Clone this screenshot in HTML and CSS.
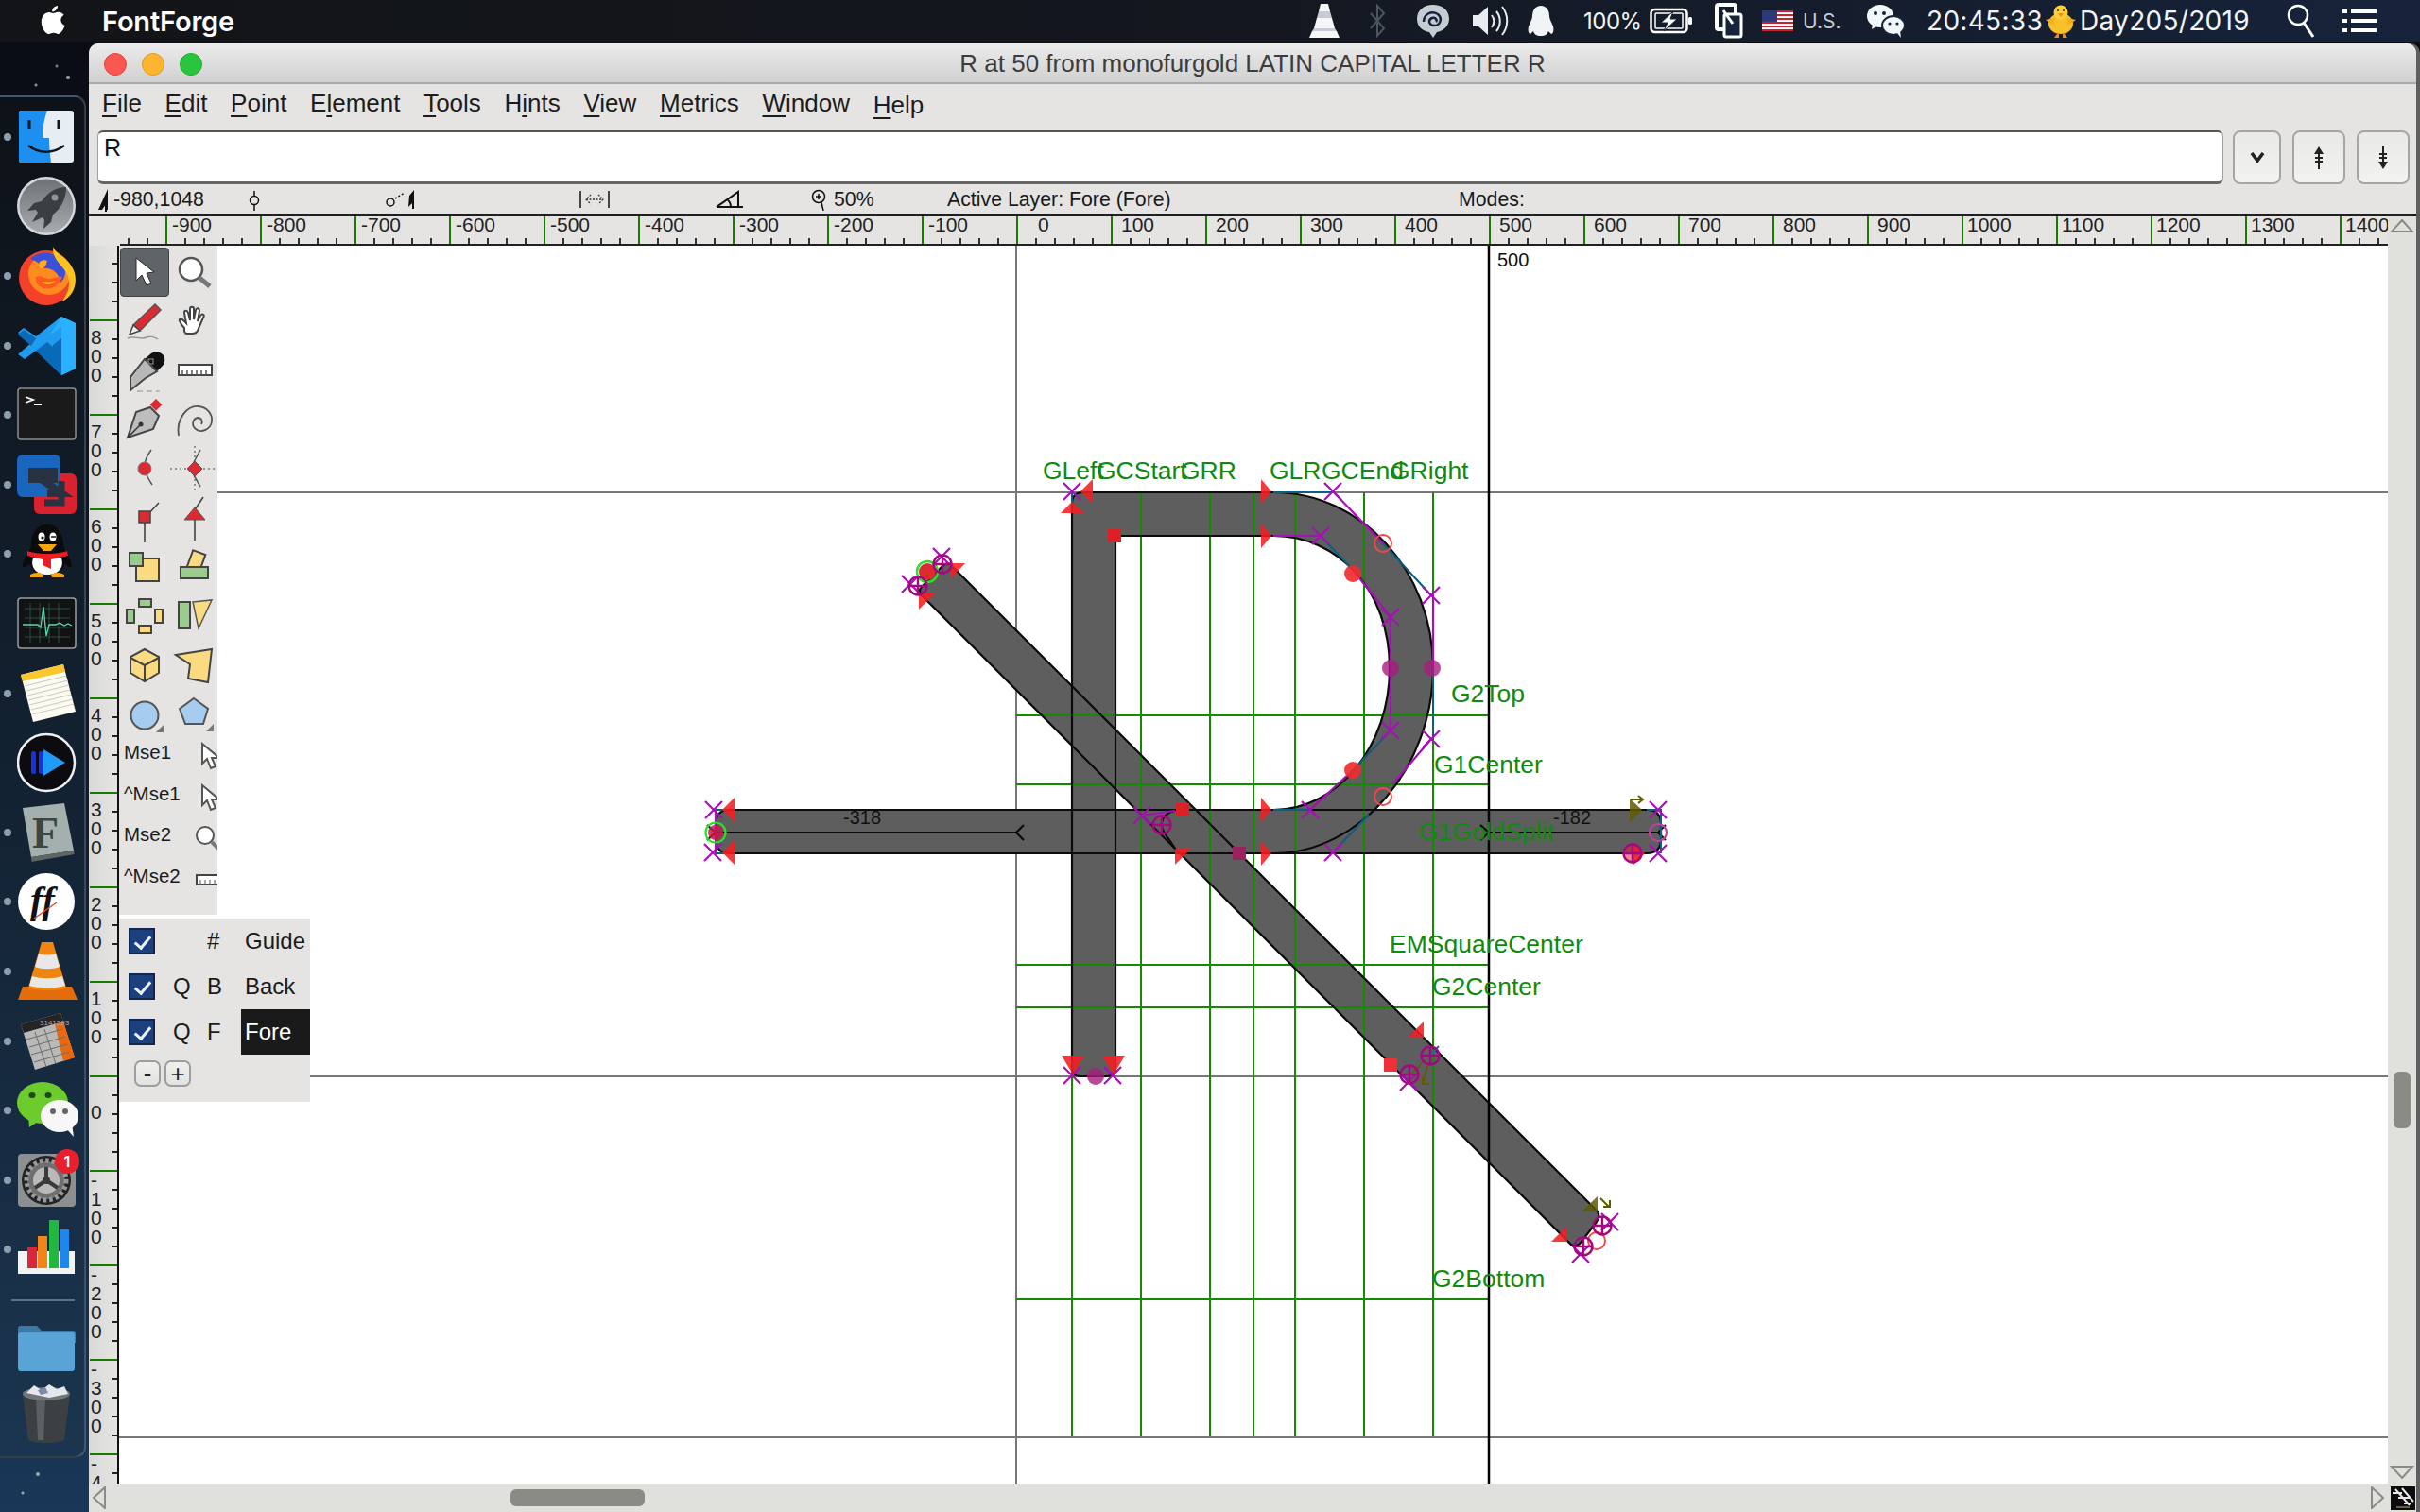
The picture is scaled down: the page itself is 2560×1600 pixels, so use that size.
FILE: index.html
```html
<!DOCTYPE html>
<html lang="en">
<head>
<meta charset="utf-8">
<title>FontForge</title>
<link rel="stylesheet" href="styles.css">
</head>
<body>
<header class="menubar">
  <div class="mb-left">
    <svg class="apple" width="26" height="34" viewBox="0 0 26 34"><path fill="#fff" d="M18 1c.3 3-2.500 6.500-5.800 6.300C11.800 4.200 14.800 1.200 18 1zM13 9c1.600 0 3.200-1.300 5.600-1.300 2.300 0 4.600 1 6 3-4.800 2.800-4 9.300 1 11.200-1.300 3.500-4 9-7 9-1.800 0-2.700-1.200-4.900-1.200s-3.200 1.200-5 1.200C5 31 .8 24 .8 18.200.8 12 4.700 8 9 8c1.600 0 3 1 4 1z"/></svg>
    <span class="appname">FontForge</span>
  </div>
  <div class="tray">
    <svg width="34" height="38" viewBox="0 0 34 38"><path fill="#f4f6f8" d="M13 1h8l2 8H11zM9 16h16l3 11H6zM4 30h26l3 7H1z"/><path fill="#c8ccd2" d="M11 9h12l2 7H9zM6 27h22l2 3H4z"/></svg>
    <svg width="20" height="36" viewBox="0 0 20 36"><path fill="none" stroke="#4b5560" stroke-width="2" d="M3 10l14 16-7 8V2l7 8L3 26"/></svg>
    <svg width="38" height="38" viewBox="0 0 38 38"><path fill="#c5ccd3" d="M19 2c10 0 17 6 17 15 0 8-7 13-13 14l-4 6-4-6C8 30 2 25 2 17 2 8 9 2 19 2z"/><path fill="none" stroke="#16233a" stroke-width="2.500" d="M9 20c0-8 8-12 15-8 5 4 3 12-4 12-5 0-7-6-2-8 3-1 6 2 4 4"/></svg>
    <svg width="40" height="36" viewBox="0 0 40 36"><path fill="#e8edf1" d="M1 12h6l10-9v30L7 24H1z"/><path fill="none" stroke="#e8edf1" stroke-width="2" d="M21 12c3 4 3 9 0 13M26 8c5 6 5 15 0 21M32 3c7 9 7 21 0 30"/></svg>
    <svg width="30" height="36" viewBox="0 0 30 36"><path fill="#f1f4f6" d="M15 2c6 0 9 5 9 11 0 3 2 6 4 11 1 4 0 8-2 8l-3-3c-1 3-3 5-8 5s-7-2-8-5l-3 3c-2 0-3-4-2-8 2-5 4-8 4-11C6 7 9 2 15 2z"/></svg>
    <span class="tray-text pct">100%</span>
    <svg width="46" height="30" viewBox="0 0 46 30"><rect x="1.500" y="3" width="38" height="24" rx="4" fill="none" stroke="#fff" stroke-width="2.500"/><rect x="6" y="7" width="29" height="16" rx="1" fill="none" stroke="#fff" stroke-width="1.500"/><rect x="41" y="11" width="4" height="8" rx="1.500" fill="#fff"/><path fill="#fff" stroke="#16233a" d="M25 5L12 17h7l-4 9 14-13h-7z"/></svg>
    <svg width="30" height="38" viewBox="0 0 30 38"><rect x="2" y="2" width="20" height="26" rx="2" fill="none" stroke="#fff" stroke-width="4"/><rect x="10" y="12" width="18" height="24" rx="2" fill="#16233a" stroke="#fff" stroke-width="3"/><path d="M9 8l10 14" stroke="#fff" stroke-width="3"/></svg>
    <svg width="33" height="22" viewBox="0 0 33 22"><rect width="33" height="22" fill="#fff"/><path stroke="#c8202c" stroke-width="2" d="M0 1h33M0 5h33M0 9h33M0 13h33M0 17h33M0 21h33"/><rect width="16" height="12" fill="#2c3a78"/></svg>
    <span class="tray-text us">U.S.</span>
    <svg width="42" height="38" viewBox="0 0 42 38"><ellipse cx="15" cy="14" rx="14" ry="12" fill="#f1f7fa"/><path fill="#f1f7fa" d="M7 22l-1 6 7-4z"/><ellipse cx="29" cy="24" rx="12" ry="10" fill="#f1f7fa" stroke="#16233a" stroke-width="2"/><path fill="#f1f7fa" d="M33 32l4 5-1-7z"/><circle cx="10" cy="11" r="2" fill="#16233a"/><circle cx="19" cy="11" r="2" fill="#16233a"/><circle cx="25" cy="22" r="1.600" fill="#16233a"/><circle cx="33" cy="22" r="1.600" fill="#16233a"/></svg>
    <span class="tray-text clock">20:45:33</span>
    <svg width="36" height="38" viewBox="0 0 36 38"><ellipse cx="18" cy="22" rx="13" ry="11" fill="#f9c02a"/><circle cx="18" cy="10" r="7.500" fill="#fbd03a"/><path fill="#ef8a1c" d="M15 11h6l-3 4zM14 33h2v4h-5zM20 33h2l3 4h-5z"/><circle cx="15" cy="8" r="1" fill="#333"/><circle cx="21" cy="8" r="1" fill="#333"/><path fill="#f5ac1f" d="M2 18l9-2v8zM34 18l-9-2v8z"/></svg>
    <span class="tray-text day">Day205/2019</span>
    <svg width="30" height="38" viewBox="0 0 30 38"><circle cx="12" cy="13" r="10" fill="none" stroke="#fff" stroke-width="2.400"/><path d="M18 21l10 15" stroke="#fff" stroke-width="3"/></svg>
    <svg width="36" height="26" viewBox="0 0 36 26"><path stroke="#fff" stroke-width="4" d="M0 3h5M9 3h27M0 13h5M9 13h27M0 23h5M9 23h27"/></svg>
  </div>
</header>

<main class="desktop">
  <nav class="dock">
    <div class="dock-item"><i class="dot"></i><svg width="64" height="64" viewBox="0 0 64 64"><rect x="2" y="4" width="58" height="55" rx="3" fill="#e6eef4"/><path fill="#1d8ff0" d="M5 4h27c-3 8-5 18-5 29h7c0 9 1 18 2 26H5a3 3 0 0 1-3-3V7a3 3 0 0 1 3-3z"/><path d="M13 14v9M44 14v9" stroke="#11161c" stroke-width="3"/><path fill="none" stroke="#11161c" stroke-width="2.400" d="M12 41c11 9 26 9 38 0"/></svg></div>
    <div class="dock-item"><i class="dot off"></i><svg width="64" height="64" viewBox="0 0 64 64"><defs><linearGradient id="lpg" x1="0" y1="0" x2="0" y2="1"><stop offset="0" stop-color="#6f7375"/><stop offset="1" stop-color="#a7abad"/></linearGradient></defs><circle cx="31" cy="32" r="31" fill="#d5d8da"/><circle cx="31" cy="32" r="28.500" fill="url(#lpg)"/><path fill="#3c3f42" d="M52 12c-10 0-19 5-26 15l-8 2-7 8 9-1 2 3-6 10 11-5 2 3-1 9 8-7 2-8c9-7 14-17 14-29z"/><circle cx="40" cy="23" r="3.500" fill="#8f9395"/></svg></div>
    <div class="dock-item"><i class="dot"></i><svg width="64" height="64" viewBox="0 0 64 64"><circle cx="31" cy="34" r="29" fill="#f5402a"/><circle cx="34" cy="30" r="22" fill="#ff8a1f"/><path fill="#3b4fd8" d="M14 14c6-6 16-8 24-5 8 3 13 10 13 19 0 6-3 9-5 11-1-9-8-16-17-15-3-4-9-8-15-10z"/><path fill="#ffc21e" d="M38 1c3 8 15 10 22 25 5 13 0 28-13 33 8-8 10-20 6-29C48 20 37 15 38 1z"/><path fill="#ff5a1e" d="M20 33c6-3 9 3 16 2 6-1 9-3 12-2-3 9-11 14-19 12-6-1-10-6-9-12z"/><path fill="#ffab1e" d="M24 17c3-2 6-2 8-1l-2 6-6 3c-1-3-1-5 0-8zM26 38c5 0 10 1 15-1-3 4-11 6-15 1z"/></svg></div>
    <div class="dock-item"><i class="dot"></i><svg width="64" height="64" viewBox="0 0 64 64"><path fill="#1f9cf0" d="M47 1l15 7v48l-15 7-27-26-12 9-7-5 14-12-14-11 6-5 13 9z"/><path fill="#0a6ab8" d="M47 1v62L20 37l12-9 6 5V31l9-7V12zM15 32L1 20l6-5 13 9z"/><path fill="#2ab0ff" d="M47 1l15 7v48l-15 7 0-51-12 8z"/></svg></div>
    <div class="dock-item"><i class="dot"></i><svg width="64" height="64" viewBox="0 0 64 64"><rect x="1" y="4" width="61" height="54" rx="3" fill="#1a1a1b" stroke="#8b8d8f" stroke-width="1.500"/><path fill="none" stroke="#fff" stroke-width="1.800" d="M9 13l8 3-8 3"/><path stroke="#fff" stroke-width="2" d="M18 21h8"/></svg></div>
    <div class="dock-item"><i class="dot"></i><svg width="64" height="64" viewBox="0 0 64 64"><rect x="18" y="20" width="45" height="43" rx="6" fill="#d8222f"/><rect x="0" y="0" width="46" height="45" rx="6" fill="#1a66be"/><rect x="12" y="14" width="31" height="16" fill="#273342"/><path fill="none" stroke="#273342" stroke-width="8" d="M14 18l33 23h-15"/><path fill="none" stroke="#273342" stroke-width="7" d="M47 28v23H29"/></svg></div>
    <div class="dock-item"><i class="dot"></i><svg width="64" height="64" viewBox="0 0 64 64"><path fill="#0b0b0b" d="M32 1c12 0 17 11 17 22 0 4 9 14 9 23-3 1-6-3-7-4-1 5-6 11-19 11S14 47 13 42c-1 2-4 5-7 4 0-9 9-19 9-23C15 12 20 1 32 1z"/><path fill="#fff" d="M17 37h30c3 8-2 17-15 17s-18-9-15-17z"/><path fill="#ea1c24" d="M11 29c10 4 32 4 42 0l1 5-18 4v10l-9-4v-6l-16-4z"/><path fill="#f6a710" d="M22 22h20l-6 7h-8zM14 54c4-2 9-3 14 0l-1 3H14zM50 54c-4-2-9-3-14 0l1 3h13z"/><ellipse cx="26" cy="14" rx="3.500" ry="4.500" fill="#fff"/><ellipse cx="38" cy="14" rx="3.500" ry="4.500" fill="#fff"/><circle cx="27" cy="15" r="1.600" fill="#111"/><path stroke="#111" stroke-width="1.500" d="M36 14h5"/></svg></div>
    <div class="dock-item"><i class="dot off"></i><svg width="64" height="64" viewBox="0 0 64 64"><rect x="1" y="5" width="61" height="53" rx="3" fill="#101214" stroke="#9a9c9e" stroke-width="1.500"/><path stroke="#2f4a3f" stroke-width="1" d="M8 16h48M8 26h48M8 36h48M8 46h48M14 10v42M24 10v42M34 10v42M44 10v42"/><path fill="none" stroke="#5fd5a8" stroke-width="1.300" d="M6 33h16l3 3 3-22 3 31 3-12h7l4-2 5 3 4-2 4 2"/></svg></div>
    <div class="dock-item"><i class="dot"></i><svg width="64" height="64" viewBox="0 0 64 64"><path fill="#fbfbf2" d="M4 12L49 1l13 50-45 11z"/><path fill="#fbc72d" d="M4 12L49 1l2 8L6 19z"/><path stroke="#c9c9c0" stroke-width="1" d="M8 24l44-11M10 29l44-11M11 34l44-11M12 39l44-11M13 44l44-11M15 49l44-11M16 54l44-11"/></svg></div>
    <div class="dock-item"><i class="dot off"></i><svg width="64" height="64" viewBox="0 0 64 64"><circle cx="31" cy="32" r="30" fill="#0c0c10" stroke="#eef0f2" stroke-width="2.500"/><rect x="15" y="20" width="5" height="24" rx="2" fill="#1730e0"/><rect x="23" y="20" width="5" height="24" rx="2" fill="#1730e0"/><path fill="#1f9cf6" d="M28 18l23 14-23 14z"/></svg></div>
    <div class="dock-item"><i class="dot"></i><svg width="64" height="64" viewBox="0 0 64 64"><path fill="#a4b0ae" d="M6 6l44-5 10 50-45 7z"/><path fill="#5e6664" d="M15 58l45-7 .5 4-45 8z"/><text x="16" y="48" class="f-serif">F</text></svg></div>
    <div class="dock-item"><i class="dot"></i><svg width="64" height="64" viewBox="0 0 64 64"><circle cx="31" cy="32" r="30" fill="#fff"/><text x="14" y="44" class="ff-serif">ff</text><path stroke="#ea4a20" stroke-width="1.500" d="M18 50l24-17"/></svg></div>
    <div class="dock-item"><i class="dot"></i><svg width="64" height="64" viewBox="0 0 64 64"><path fill="#e46c0a" d="M6 48h52l6 14H1z"/><path fill="#ef8610" d="M26 1h12l14 48c-4 4-36 4-40 0z"/><path fill="#e8e8e8" d="M23 13c5 2 13 2 18 0l4 14c-7 3-19 3-26 0zM16 37c9 3 23 3 32 0l3 10c-8 3-30 3-38 0z"/></svg></div>
    <div class="dock-item"><i class="dot"></i><svg width="64" height="64" viewBox="0 0 64 64"><path fill="#b9b9b8" d="M4 14L46 2l15 47-42 13z"/><path fill="#e8690f" d="M38 5l8-3 15 47-12 4z"/><path fill="#242424" d="M4 14L46 2l3 9-42 12z"/><text x="24" y="15" class="calc-digits">3141593</text><path stroke="#6d6d6d" stroke-width="1" d="M10 30l38-11M13 38l38-11M15 46l38-11M18 54l38-11M19 22l12 37M29 19l12 37"/></svg></div>
    <div class="dock-item"><i class="dot"></i><svg width="64" height="64" viewBox="0 0 64 64"><ellipse cx="27" cy="24" rx="27" ry="22" fill="#6dcc2d"/><path fill="#6dcc2d" d="M12 38l1 12 12-8z"/><ellipse cx="45" cy="38" rx="20" ry="17" fill="#f7f7f7"/><path fill="#f7f7f7" d="M51 50l9 10-2-14z"/><ellipse cx="16" cy="16" rx="3.500" ry="3" fill="#1c4a1a"/><ellipse cx="33" cy="16" rx="3.500" ry="3" fill="#1c4a1a"/><circle cx="38" cy="33" r="3" fill="#636363"/><circle cx="51" cy="33" r="3" fill="#636363"/></svg></div>
    <div class="dock-item"><i class="dot"></i><svg class="badged" width="64" height="64" viewBox="0 0 64 64"><rect x="1" y="4" width="61" height="56" rx="4" fill="#8d8f90"/><circle cx="31" cy="32" r="26" fill="#232323"/><circle cx="31" cy="32" r="20" fill="#6f6f6f"/><circle cx="31" cy="32" r="21" fill="none" stroke="#9a9a9a" stroke-width="5" stroke-dasharray="3.500 3"/><circle cx="31" cy="32" r="14" fill="#b9b9b9"/><path stroke="#3a3a3a" stroke-width="4" d="M31 32V18M31 32L19 40M31 32l12 8"/><circle cx="31" cy="32" r="4" fill="#3a3a3a"/></svg><b class="badge">1</b></div>
    <div class="dock-item"><i class="dot"></i><svg width="64" height="64" viewBox="0 0 64 64"><path fill="#f3f3f3" d="M1 34h60v24H1z"/><rect x="11" y="30" width="10" height="22" fill="#d9263b"/><rect x="22" y="18" width="10" height="34" fill="#f0861a"/><rect x="34" y="1" width="10" height="51" fill="#22b83f"/><rect x="45" y="11" width="10" height="41" fill="#1f86ec"/></svg></div>
    <div class="dock-sep"></div>
    <div class="dock-item dock-folder"><i class="dot off"></i><svg width="64" height="50" viewBox="0 0 64 50"><path fill="#3d7aa8" d="M1 4a3 3 0 0 1 3-3h17l5 5h33a3 3 0 0 1 3 3v10H1z"/><rect x="1" y="8" width="60" height="41" rx="3" fill="#5aa3d6"/></svg></div>
    <div class="dock-item dock-trash"><i class="dot off"></i><svg width="64" height="66" viewBox="0 0 64 66"><path fill="#3c4043" d="M6 14h50l-6 48c-8 4-30 4-38 0z"/><path fill="#5b6063" d="M20 16h10l-2 46h-6z"/><ellipse cx="31" cy="13" rx="25" ry="7" fill="#71767a"/><path fill="#e5e7ea" d="M10 12l8-8 8 5 8-6 8 5 8-3 4 8-20 4z"/><path fill="#7b8aa8" d="M22 9l8-3 3 6-8 2z"/></svg></div>
  </nav>

  <section class="window">
    <div class="titlebar">
      <div class="lights"><i class="light red"></i><i class="light amber"></i><i class="light green"></i></div>
      <span class="wintitle">R at 50 from monofurgold LATIN CAPITAL LETTER R</span>
    </div>
    <div class="appmenu">
      <span><u>F</u>ile</span><span><u>E</u>dit</span><span><u>P</u>oint</span><span>E<u>l</u>ement</span><span><u>T</u>ools</span><span>H<u>i</u>nts</span><span><u>V</u>iew</span><span><u>M</u>etrics</span><span><u>W</u>indow</span><span class="help"><u>H</u>elp</span>
    </div>
    <div class="inputrow">
      <div class="glyphinput">R</div>
      <button class="sq narrow"><svg width="16" height="14" viewBox="0 0 16 14"><path fill="none" stroke="#222" stroke-width="3.500" d="M2 2l6 8 6-8"/></svg></button>
      <button class="sq"><svg width="12" height="24" viewBox="0 0 12 24"><path fill="#222" d="M6 0l5 8H1z"/><path stroke="#222" stroke-width="2" d="M6 6v18M2 12h8M2 16h8"/></svg></button>
      <button class="sq"><svg width="12" height="24" viewBox="0 0 12 24"><path fill="#222" d="M6 24l5-8H1z"/><path stroke="#222" stroke-width="2" d="M6 0v18M2 8h8M2 12h8"/></svg></button>
    </div>
    <div class="statusrow">
      <svg width="17" height="26" viewBox="0 0 17 26"><path fill="#111" d="M11 2v22H9v-6l-4 6H1z"/><path d="M9 16v10" stroke="#111" stroke-width="2"/></svg>
      <span>-980,1048</span>
      <svg width="14" height="24" viewBox="0 0 14 24"><circle cx="7" cy="13" r="4.500" fill="none" stroke="#111" stroke-width="1.500"/><path stroke="#111" stroke-width="1.500" d="M7 3v6M7 17v7"/></svg>
      <svg width="34" height="24" viewBox="0 0 34 24"><circle cx="5" cy="15" r="4" fill="none" stroke="#111" stroke-width="1.500"/><path stroke="#111" stroke-dasharray="2 2" stroke-width="1.500" d="M10 11l10-6"/><path fill="#111" d="M30 2v20h-2v-6l-4 4 1-12z"/></svg>
      <svg width="32" height="22" viewBox="0 0 32 22"><path stroke="#111" stroke-width="1.500" d="M1 2v18M31 2v18"/><path fill="none" stroke="#333" stroke-dasharray="2 1.500" stroke-width="1.300" d="M12 6l-5 5 5 5M20 6l5 5-5 5M7 11h18"/></svg>
      <svg width="32" height="20" viewBox="0 0 32 20"><path fill="none" stroke="#111" stroke-width="2" d="M2 18h28M2 18L25 2v16M13 10c3 2 4 5 4 8"/></svg>
      <svg width="16" height="24" viewBox="0 0 16 24"><circle cx="8" cy="9" r="6.500" fill="none" stroke="#111" stroke-width="1.500"/><path stroke="#111" stroke-width="1.500" d="M5 9h6M8 6v6M11 15l2 9"/></svg>
      <span>50%</span>
      <span>Active Layer: Fore (Fore)</span>
      <span>Modes:</span>
    </div>
    <div class="rulerrow">
      <div class="hruler">
        <span>-900</span><span>-800</span><span>-700</span><span>-600</span><span>-500</span><span>-400</span><span>-300</span><span>-200</span><span>-100</span><span class="zero">0</span><span class="pos">100</span><span class="pos">200</span><span class="pos">300</span><span class="pos">400</span><span class="pos">500</span><span class="pos">600</span><span class="pos">700</span><span class="pos">800</span><span class="pos">900</span><span class="kilo">1000</span><span class="kilo">1100</span><span class="kilo">1200</span><span class="kilo">1300</span><span class="kilo">1400</span>
      </div>
      <div class="rulercap"><svg width="26" height="14" viewBox="0 0 26 14"><path fill="none" stroke="#8a8b85" stroke-width="2" d="M13 1l11 12H2z"/></svg></div>
    </div>
    <div class="workarea">
      <div class="vruler">
        <div class="vcell"><b>8</b><b>0</b><b>0</b></div>
        <div class="vcell"><b>7</b><b>0</b><b>0</b></div>
        <div class="vcell"><b>6</b><b>0</b><b>0</b></div>
        <div class="vcell"><b>5</b><b>0</b><b>0</b></div>
        <div class="vcell"><b>4</b><b>0</b><b>0</b></div>
        <div class="vcell"><b>3</b><b>0</b><b>0</b></div>
        <div class="vcell"><b>2</b><b>0</b><b>0</b></div>
        <div class="vcell"><b>1</b><b>0</b><b>0</b></div>
        <div class="vcell vzero"><b>0</b></div>
        <div class="vcell vneg"><b>-</b><b>1</b><b>0</b><b>0</b></div>
        <div class="vcell vneg"><b>-</b><b>2</b><b>0</b><b>0</b></div>
        <div class="vcell vneg"><b>-</b><b>3</b><b>0</b><b>0</b></div>
        <div class="vcell vneg"><b>-</b><b>4</b></div>
      </div>
      <div class="canvas">
        <svg class="glyph" width="2400" height="1310" viewBox="126 260 2400 1310">
          <defs>
            <g id="mx"><path d="M-9 -9L9 9M-9 9L9 -9" stroke="#a80fb8" stroke-width="2.200" fill="none"/></g>
            <g id="cc" fill="none" stroke="#a3087e" stroke-width="2.400"><circle r="9.500"/><path d="M-9.500 0H9.500M0 -9.500V9.500"/></g>
            <g id="hr"><circle r="9" fill="none" stroke="#f04848" stroke-width="2"/></g>
            <g id="rd"><circle r="9" fill="#ee2c30" opacity=".92"/></g>
            <g id="pd"><circle r="9" fill="#a81d80" opacity=".8"/></g>
            <g id="tr"><path d="M-11 -13L0 0L-11 13Z" fill="#f41e22" opacity=".88"/></g>
            <g id="tl"><path d="M13 -13L0 0L13 13Z" fill="#f41e22" opacity=".88"/></g>
            <g id="td"><path d="M-12 -20H12L0 0Z" fill="#f41e22" opacity=".88"/></g>
            <g id="sq"><rect x="-7" y="-7" width="14" height="14" fill="#dd2026"/></g>
          </defs>
          <!-- guides -->
          <g stroke="#777" stroke-width="2"><path d="M126 521H2526M126 1139H2526M126 1521H2526M1075 260V1570"/></g>
          <!-- glyph fill -->
          <g fill="#5e5e5e">
            <path d="M1134 533Q1134 521 1146 521L1347 521C1440 521 1516 604 1516 707C1516 810 1440 903 1347 903L1347 857C1415 857 1470 790 1470 707C1470 624 1415 567 1347 567L1180 567L1180 1130Q1180 1139 1171 1139L1143 1139Q1134 1139 1134 1130Z"/>
            <path d="M772 857L1742 857Q1757 857 1757 872L1757 888Q1757 903 1742 903L772 903Q757 903 757 888L757 872Q757 857 772 857Z"/>
            <path d="M1005 597L1690 1282Q1693 1287 1689 1293L1672 1315Q1668 1320 1662 1317L975 630Q971 625 975 621L996 600Q1001 595 1005 597Z"/>
          </g>
          <!-- hints -->
          <g stroke="#158a00" stroke-width="2" fill="none">
            <path d="M1134 521V1520M1207 521V1520M1280 521V1520M1326 521V1520M1370 521V1520M1443 521V1520M1516 521V1520"/>
            <path d="M1075 757H1575M1075 830H1575M1075 1021H1575M1075 1066H1575M1075 1375H1575"/>
          </g>
          <path d="M1575 260V1570" stroke="#000" stroke-width="2.500"/>
          <!-- outlines -->
          <g fill="none" stroke="#0b0b0b" stroke-width="2.200">
            <path d="M1134 1130L1134 533Q1134 521 1146 521L1347 521C1440 521 1516 604 1516 707C1516 810 1440 903 1347 903"/>
            <path d="M1347 857C1415 857 1470 790 1470 707C1470 624 1415 567 1347 567L1180 567L1180 1130Q1180 1139 1171 1139L1143 1139Q1134 1139 1134 1130"/>
            <path d="M772 857L1742 857Q1757 857 1757 872L1757 888Q1757 903 1742 903L772 903Q757 903 757 888L757 872Q757 857 772 857Z"/>
            <path d="M1005 597L1690 1282Q1693 1287 1689 1293L1672 1315Q1668 1320 1662 1317L975 630Q971 625 975 621L996 600Q1001 595 1005 597Z"/>
            <path d="M1243 858C1232 860 1225 870 1231 880C1236 888 1240 893 1243 898"/>
            <path d="M757 881H1075M1575 881H1754M748 873L757 881L748 889M1083 873L1075 881L1083 889M1566 873L1575 881L1566 889M1762 873L1754 881L1762 889"/>
          </g>
          <!-- handles -->
          <g fill="none" stroke="#0a6080" stroke-width="2">
            <path d="M1347 521H1410M1463 575L1514 630M1516 707V782M1397 567L1431 603M1471 773L1431 815M1386 857H1347M1448 862L1410 902M1134 521V533M757 857H768M757 903H768M1742 857H1757V903"/>
          </g>
          <g fill="none" stroke="#a80fb8" stroke-width="2.200">
            <path d="M1410 520L1463 575M1347 567H1397M1431 603L1471 653V773M1516 630V707M1431 815L1386 857M1514 782L1473 830M1208 863L1243 858M757 857V903"/>
          </g>
          <!-- points -->
          <use href="#mx" x="1134" y="520"/><use href="#mx" x="1410" y="520"/><use href="#mx" x="1514" y="630"/><use href="#mx" x="1471" y="653"/><use href="#mx" x="1397" y="567"/><use href="#mx" x="1514" y="782"/><use href="#mx" x="1471" y="773"/><use href="#mx" x="1386" y="857"/><use href="#mx" x="1410" y="902"/><use href="#mx" x="1208" y="863"/><use href="#mx" x="755" y="857"/><use href="#mx" x="754" y="902"/><use href="#mx" x="1754" y="857"/><use href="#mx" x="1754" y="903"/><use href="#mx" x="963" y="618"/><use href="#mx" x="996" y="589"/><use href="#mx" x="1490" y="1145"/><use href="#mx" x="1672" y="1327"/><use href="#mx" x="1703" y="1293"/><use href="#mx" x="1134" y="1138"/><use href="#mx" x="1177" y="1138"/>
          <path d="M1513 1117L1522 1107" stroke="#1a6ab0" stroke-width="2"/>
          <use href="#tr" x="1345" y="520"/><use href="#tr" x="1345" y="567"/><use href="#tr" x="1345" y="857"/><use href="#tr" x="1345" y="903"/>
          <use href="#tl" x="1143" y="520"/><path d="M1122 543L1134 531L1147 543Z" fill="#f41e22" opacity=".88"/>
          <use href="#tl" x="764" y="857"/><use href="#tl" x="764" y="902"/>
          <use href="#td" x="1135" y="1137"/><use href="#td" x="1178" y="1137"/>
          <use href="#sq" x="1179" y="567"/><use href="#sq" x="1251" y="857"/><rect x="1304" y="896" width="14" height="14" fill="#99225f"/><rect x="1464" y="1120" width="14" height="14" fill="#f03038"/>
          <use href="#rd" x="1431" y="607"/><use href="#rd" x="1431" y="815"/><use href="#pd" x="1471" y="707"/><use href="#pd" x="1515" y="707"/><use href="#pd" x="1159" y="1139"/>
          <use href="#hr" x="1463" y="575"/><use href="#hr" x="1463" y="843"/><use href="#hr" x="1689" y="1313"/>
          <path d="M1243 898H1260L1243 915Z" fill="#f41e22" opacity=".88"/>
          <path d="M1005 596H1021L1005 613ZM972 628H989L972 645ZM1506 1081V1098H1489ZM1658 1297V1314H1641ZM1727 890V916L1740 903Z" fill="#f41e22" opacity=".88"/>
          <path d="M1690 1266V1282H1673ZM1724 845V870L1737 857ZM1506 1122L1490 1138L1500 1132Z" fill="#605c00" opacity=".85"/>
          <path d="M1693 1268L1702 1277M1703 1270V1277H1696M1725 846H1738M1733 842L1738 846L1733 850M1510 1128L1505 1147M1505 1140V1147H1512" fill="none" stroke="#605c00" stroke-width="2"/>
          <circle cx="757" cy="881" r="8" fill="#c81848" opacity=".85"/><circle cx="757" cy="881" r="10.500" fill="none" stroke="#28e028" stroke-width="2.200"/>
          <circle cx="981" cy="605" r="9" fill="#dd2a30"/><circle cx="981" cy="605" r="11" fill="none" stroke="#28e028" stroke-width="2.400"/>
          <circle cx="1754" cy="881" r="9" fill="none" stroke="#c040a0" stroke-width="2.200"/>
          <circle cx="1727" cy="903" r="9" fill="#e02040" opacity=".55"/>
          <use href="#cc" x="1229" y="873"/><use href="#cc" x="971" y="620"/><use href="#cc" x="997" y="597"/><use href="#cc" x="1491" y="1137"/><use href="#cc" x="1513" y="1117"/><use href="#cc" x="1675" y="1319"/><use href="#cc" x="1695" y="1297"/><use href="#cc" x="1727" y="903"/>
          <!-- labels -->
          <g class="hintlabel">
            <text x="1103" y="507">GLeft</text><text x="1160" y="507">GCStart</text><text x="1249" y="507">GRR</text><text x="1343" y="507">GLR</text><text x="1398" y="507">GCEnd</text><text x="1471" y="507">GRight</text>
            <text x="1535" y="743">G2Top</text><text x="1517" y="818">G1Center</text><text x="1501" y="889">G1GoldSplit</text><text x="1470" y="1008">EMSquareCenter</text><text x="1515" y="1053">G2Center</text><text x="1515" y="1362">G2Bottom</text>
          </g>
          <g class="widthlabel"><text x="892" y="872">-318</text><text x="1643" y="872">-182</text><text x="1584" y="282">500</text></g>
        </svg>

        <aside class="toolbox">
          <div class="tools">
            <div class="tool active"><svg width="52" height="52" viewBox="0 0 52 52"><path fill="#fff" stroke="#2a2a2a" stroke-width="1" d="M17 11v24l6-6 5 11 5-2-5-11 8-1z"/></svg></div>
            <div class="tool"><svg width="52" height="52" viewBox="0 0 52 52"><circle cx="22" cy="23" r="12" fill="#fff" stroke="#555" stroke-width="2.500"/><path stroke="#777" stroke-width="5" d="M31 32l11 9"/></svg></div>
            <div class="tool"><svg width="52" height="52" viewBox="0 0 52 52"><path fill="#dc2a33" stroke="#555" stroke-width="1.500" d="M37 8l6 6-22 22-7-6z"/><path fill="#eee" stroke="#444" stroke-width="1.500" d="M14 30l7 6-11 4z"/><path fill="none" stroke="#999" stroke-width="1.500" d="M8 44c8-3 14 2 20-1 5-2 8 0 12 2"/></svg></div>
            <div class="tool"><svg width="52" height="52" viewBox="0 -4 52 52"><path fill="#fff" stroke="#444" stroke-width="2" d="M15 29c-3-3-6-8-5-9 2-2 5 2 7 4l-2-11c0-3 3-3 4 0l2 8V9c0-3 4-3 4 0v11l2-10c1-3 4-2 4 1l-2 11 3-6c2-3 5-1 3 2l-6 14c-1 2-3 3-6 3h-5c-2 0-3-2-3-3z"/></svg></div>
            <div class="tool"><svg width="52" height="52" viewBox="0 0 52 52"><path fill="#111" d="M33 8c4-3 9-2 12 1s3 8 0 12l-6 6-13-13z"/><path fill="#b8b8b8" stroke="#444" stroke-width="2" d="M26 14l13 13-12 7-16 13 0-14z"/><rect x="30" y="14" width="5" height="5" fill="none" stroke="#999"/><path stroke="#aaa" stroke-width="1.500" stroke-dasharray="6 4" d="M18 48h24"/></svg></div>
            <div class="tool"><svg width="52" height="52" viewBox="0 0 52 52"><rect x="9" y="20" width="35" height="11" fill="#fff" stroke="#444" stroke-width="2"/><path stroke="#555" stroke-width="1.500" d="M13 26v5M18 26v5M23 26v5M28 26v5M33 26v5M38 26v5"/></svg></div>
            <div class="tool"><svg width="52" height="52" viewBox="0 0 52 52"><path fill="#bdbdbd" stroke="#444" stroke-width="2" d="M32 13l9 9-6 14-27 9 9-27z"/><path stroke="#333" stroke-width="1.500" d="M8 45l13-13"/><circle cx="22" cy="31" r="2.500" fill="#333"/><rect x="33" y="6" width="9" height="9" transform="rotate(45 38 11)" fill="#dc2a33"/></svg></div>
            <div class="tool"><svg width="52" height="52" viewBox="0 0 52 52"><path fill="none" stroke="#555" stroke-width="1.800" d="M9 43C6 25 18 11 30 12c9 1 15 8 14 16-1 8-11 13-17 8-5-4-3-11 2-12 4 0 6 4 4 7"/></svg></div>
            <div class="tool"><svg width="52" height="52" viewBox="0 0 52 52"><path fill="none" stroke="#555" stroke-width="1.500" d="M33 6c-4 6-8 12-7 20 1 6 4 11 8 17"/><circle cx="26" cy="26" r="7" fill="#dc2a33" stroke="#777"/></svg></div>
            <div class="tool"><svg width="52" height="52" viewBox="0 0 52 52"><path fill="none" stroke="#555" stroke-width="1.500" d="M32 6l-7 13M25 33l7 12"/><path fill="none" stroke="#777" stroke-width="1.500" stroke-dasharray="2 3" d="M0 26h52M26 2v50"/><path fill="#dc2a33" stroke="#555" d="M26 18l8 8-8 8-8-8z"/></svg></div>
            <div class="tool"><svg width="52" height="52" viewBox="0 0 52 52"><path stroke="#444" stroke-width="1.600" d="M28 24L41 10M26 30v22" fill="none"/><rect x="20" y="19" width="12" height="12" fill="#dc2a33" stroke="#444" stroke-width="1.500"/></svg></div>
            <div class="tool"><svg width="52" height="52" viewBox="0 0 52 52"><path stroke="#444" stroke-width="1.600" d="M27 16l8-12M26 28v22" fill="none"/><path fill="#dc2a33" stroke="#555" d="M26 15l11 13H15z"/></svg></div>
            <div class="tool"><svg width="52" height="52" viewBox="0 0 52 52"><rect x="17" y="17" width="24" height="24" fill="#fbdb82" stroke="#444" stroke-width="2"/><rect x="10" y="11" width="14" height="14" fill="#9ccb8f" stroke="#444" stroke-width="2"/></svg></div>
            <div class="tool"><svg width="52" height="52" viewBox="0 0 52 52"><rect x="20" y="10" width="14" height="24" transform="rotate(20 27 21)" fill="#fbdb82" stroke="#444" stroke-width="2"/><rect x="11" y="26" width="29" height="12" fill="#9ccb8f" stroke="#444" stroke-width="2"/></svg></div>
            <div class="tool"><svg width="52" height="52" viewBox="0 0 52 52"><rect x="20" y="8" width="13" height="8" fill="#9ccb8f" stroke="#444" stroke-width="2"/><rect x="20" y="36" width="13" height="8" fill="#fbdb82" stroke="#444" stroke-width="2"/><rect x="7" y="19" width="8" height="14" fill="#9ccb8f" stroke="#444" stroke-width="2"/><rect x="37" y="19" width="8" height="14" fill="#fbdb82" stroke="#444" stroke-width="2"/></svg></div>
            <div class="tool"><svg width="52" height="52" viewBox="0 0 52 52"><path fill="#fbdb82" stroke="#555" stroke-width="1.500" d="M24 11l20-2-14 30z"/><rect x="9" y="11" width="12" height="28" fill="#9ccb8f" stroke="#444" stroke-width="2"/></svg></div>
            <div class="tool"><svg width="52" height="52" viewBox="0 0 52 52"><path fill="#fbdb82" stroke="#444" stroke-width="2" d="M26 9l15 8v17l-15 9-15-9V17z"/><path fill="none" stroke="#444" stroke-width="2" d="M11 18l15 8 15-8M26 26v17"/></svg></div>
            <div class="tool"><svg width="52" height="52" viewBox="0 0 52 52"><path fill="#fbdb82" stroke="#444" stroke-width="2" d="M6 15l38-6-4 35-21-4 2-15z"/></svg></div>
            <div class="tool"><svg width="52" height="52" viewBox="0 0 52 52"><circle cx="26" cy="27" r="14.500" fill="#a6cdf0" stroke="#555" stroke-width="2"/><path fill="#777" d="M46 37v8h-8z"/></svg></div>
            <div class="tool"><svg width="52" height="52" viewBox="0 0 52 52"><path fill="#a6cdf0" stroke="#555" stroke-width="2" d="M25 9l15 11-5 16H16l-6-16z"/><path fill="#777" d="M46 36v8h-8z"/></svg></div>
          </div>
          <div class="mouse">
            <div class="mrow"><span>Mse1</span><svg width="22" height="30" viewBox="0 0 22 30"><path fill="#fff" stroke="#555" stroke-width="2" d="M2 2v21l5-5 4 10 5-2-4-9h8z"/></svg></div>
            <div class="mrow"><span>^Mse1</span><svg width="22" height="30" viewBox="0 0 22 30"><path fill="#fff" stroke="#555" stroke-width="2" d="M2 2v21l5-5 4 10 5-2-4-9h8z"/></svg></div>
            <div class="mrow"><span>Mse2</span><svg width="28" height="30" viewBox="0 0 28 30"><circle cx="10" cy="12" r="9" fill="#fff" stroke="#555" stroke-width="2"/><path stroke="#777" stroke-width="4" d="M17 19l8 8"/></svg></div>
            <div class="mrow"><span>^Mse2</span><svg width="28" height="12" viewBox="0 0 28 12"><rect x="1" y="1" width="30" height="10" fill="#fff" stroke="#444" stroke-width="2"/><path stroke="#555" d="M5 6v5M10 6v5M15 6v5M20 6v5"/></svg></div>
          </div>
        </aside>
        <aside class="layers">
          <div class="lrow"><i class="check"></i><span class="lq"></span><span class="lk">#</span><span class="ln">Guide</span></div>
          <div class="lrow"><i class="check"></i><span class="lq">Q</span><span class="lk">B</span><span class="ln">Back</span></div>
          <div class="lrow"><i class="check"></i><span class="lq">Q</span><span class="lk">F</span><span class="ln sel">Fore</span></div>
          <div class="lbtns"><button class="pm">-</button><button class="pm">+</button></div>
        </aside>
      </div>
      <div class="vscroll">
        <div class="vthumb"></div>
        <svg width="26" height="14" viewBox="0 0 26 14"><path fill="none" stroke="#8a8b85" stroke-width="2" d="M13 13L24 1H2z"/></svg>
      </div>
    </div>
    <div class="bottombar">
      <svg class="ba-left" width="14" height="24" viewBox="0 0 14 24"><path fill="none" stroke="#8a8b85" stroke-width="2" d="M13 1L1 12l12 11z"/></svg>
      <div class="hthumb"></div>
      <svg class="ba-right" width="14" height="24" viewBox="0 0 14 24"><path fill="none" stroke="#8a8b85" stroke-width="2" d="M1 1l12 11L1 23z"/></svg>
      <svg class="corner" width="26" height="25" viewBox="0 0 26 25"><rect width="26" height="25" fill="#0c0c0c"/><path stroke="#e8e8e8" stroke-width="2" fill="none" d="M5 3l15 17M12 2l12 14M2 7h10M8 12h12M14 18h8"/><path stroke="#6b5a40" stroke-width="2" d="M6 22h14"/></svg>
    </div>
  </section>
</main>
</body>
</html>
```
FILE: styles.css
```css
* { box-sizing: border-box; }
html, body { margin: 0; padding: 0; }
body {
  width: 2560px; height: 1600px; overflow: hidden;
  display: flex; flex-direction: column;
  font-family: "Liberation Sans", Arial, sans-serif;
  background:
    radial-gradient(circle at 60px 70px, #778 0 1px, transparent 2px),
    radial-gradient(circle at 38px 90px, #889 0 1px, transparent 2px),
    radial-gradient(circle at 72px 82px, #99a 0 1.500px, transparent 2.500px),
    radial-gradient(circle at 40px 1560px, #8aa 0 1.500px, transparent 2.500px),
    radial-gradient(circle at 24px 1580px, #8aa 0 1px, transparent 2px),
    linear-gradient(180deg, #0a0c13 0%, #0f1b2d 50%, #1a3758 100%);
}
.menubar {
  height: 44px; flex: none;
  display: flex; align-items: center; justify-content: space-between;
  background: linear-gradient(90deg, #121417 0%, #14171f 50%, #16233a 100%);
  color: #fff;
}
.mb-left { display: flex; align-items: center; padding-left: 43px; }
.appname { font: 600 29px "Inter", sans-serif; margin-left: 39px; letter-spacing: -.2px; }
.tray {
  width: 1176px; height: 44px;
  display: grid; align-items: center;
  grid-template-columns: 63px 50px 60px 58px 60px 70px 69px 50px 43px 67px 64px 124px 38px 219px 59px 82px;
  font: 400 28px "Inter", sans-serif; color: #f2f4f6;
}
.tray-text { white-space: nowrap; }
.pct { font-size: 24px; letter-spacing: -.5px; }
.us { font-size: 21px; color: #c6ccd3; }
.clock, .day { letter-spacing: .3px; }

.desktop { flex: 1; position: relative; }
.dock {
  position: absolute; left: 0; top: 57px; width: 91px; height: 1442px;
  padding-top: 5px;
  display: flex; flex-direction: column;
  background: linear-gradient(180deg, #0e1218 0%, #12202f 45%, #1b3550 100%);
  border: 2px solid rgba(200, 215, 230, .22); border-left: none;
  border-radius: 0 12px 12px 0;
}
.dock-item { position: relative; height: 73.6px; flex: none; display: flex; align-items: center; padding-left: 4px; }
.dot { width: 8px; height: 8px; border-radius: 50%; background: #8e9fb0; margin-right: 6px; flex: none; }
.dot.off { visibility: hidden; }
.badge {
  position: absolute; left: 58px; top: 4px; width: 26px; height: 26px; border-radius: 50%;
  background: #e8202e; color: #fff; font: 600 16px/26px "Inter", sans-serif; text-align: center;
}
.dock-sep { height: 2px; background: #5b748c; margin: 16px 10px 26px 12px; flex: none; }
.dock-folder { height: 48px; }
.dock-trash { height: 68px; margin-top: 10px; }
.f-serif { font: 700 46px "Liberation Serif", serif; fill: #3c4644; }
.ff-serif { font: italic 700 40px "Liberation Serif", serif; fill: #111; }
.calc-digits { font: 400 8px "Liberation Sans", sans-serif; fill: #aaa; }

.window {
  position: absolute; left: 94px; top: 2px; width: 2462px; height: 1554px;
  display: flex; flex-direction: column;
  background: #e5e4e2; border-radius: 10px 10px 0 0; overflow: hidden;
  color: #111; box-shadow: 4px 0 0 #5f5f5f;
}
.titlebar {
  height: 43px; flex: none; position: relative;
  display: flex; align-items: center; justify-content: center;
  background: linear-gradient(180deg, #ececec, #d0d0d0);
  border-bottom: 2px solid #a9a9a9;
  padding-top: 2px;
}
.lights { position: absolute; left: 16px; top: 10px; display: flex; gap: 16px; }
.light { width: 24px; height: 24px; border-radius: 50%; }
.red { background: #fc5650; border: 1px solid #e0443e; }
.amber { background: #fdb42e; border: 1px solid #de9a1f; }
.green { background: #29c53f; border: 1px solid #1ead2b; }
.wintitle { font-size: 26px; color: #3c3c3c; }
.appmenu {
  height: 49px; flex: none;
  display: flex; gap: 24.7px; padding: 0 0 0 14px;
  font-size: 26px; line-height: 40px; color: #1c1c1c;
}
.appmenu u { text-decoration-thickness: 2px; text-underline-offset: 4px; }
.help { margin-top: 2px; }
.inputrow { height: 57px; flex: none; display: flex; padding-left: 9px; }
.glyphinput {
  width: 2249px; height: 57px; background: #fff;
  border: 1px solid #a0a0a0; border-top: 2px solid #555; border-bottom: 3px solid #666;
  border-radius: 6px; font-size: 25px; line-height: 24px; padding: 4px 6px; color: #111;
}
.sq {
  width: 56px; height: 57px; margin-left: 12px; padding: 0;
  display: flex; align-items: center; justify-content: center;
  background: linear-gradient(180deg, #e9e9e7, #f2f2f0);
  border: 2px solid #a5a5a3; border-radius: 8px;
}
.sq.narrow { width: 51px; margin-left: 10px; }
.statusrow {
  height: 31px; flex: none; font-size: 21.3px; line-height: 30px;
  display: grid; align-items: center;
  grid-template-columns: 9px 17px 142px 146px 205px 143px 102px 24px 120px 541px auto;
  color: #1a1a1a;
}
.statusrow svg:first-child { grid-column: 2; }
.rulerrow { height: 34px; flex: none; display: flex; border-top: 3px solid #1f1f1f; }
.hruler {
  width: 2432px; height: 31px;
  display: flex; padding-left: 81px;
  font-size: 21px; line-height: 17.5px; color: #222;
  background:
    linear-gradient(#222, #222) 33px 29px / 2399px 2px no-repeat,
    repeating-linear-gradient(90deg, #1a7a00 0 2px, transparent 2px 100px) 81px 0 / 2351px 29px no-repeat,
    repeating-linear-gradient(90deg, #333 0 2px, transparent 2px 20px) 41px 23px / 2391px 6px no-repeat;
}
.hruler span { flex: none; width: 100px; padding-left: 7px; }
.hruler .zero { padding-left: 23px; }
.hruler .pos { padding-left: 11px; }
.hruler .kilo { padding-left: 6px; }
.rulercap { flex: 1; display: flex; padding: 3px 0 0 2px; background: #e0e0dd; }
.workarea { flex: 1; display: flex; min-height: 0; }
.vruler {
  width: 32px; flex: none; padding-top: 79px; overflow: hidden;
  background:
    linear-gradient(#111, #111) 30px 0 / 2px 100% no-repeat,
    repeating-linear-gradient(180deg, #1a7a00 0 2px, transparent 2px 100px) 1px 78px / 30px 100% no-repeat,
    repeating-linear-gradient(180deg, #222 0 2px, transparent 2px 20px) 25px 18px / 6px 100% no-repeat,
    linear-gradient(90deg, #d9d9d7, #e6e5e3);
}
.vcell { height: 100px; flex: none; padding: 8px 0 0 2px; font-size: 21px; line-height: 20px; color: #222; }
.vcell b { display: block; font-weight: 400; }
.vzero { padding-top: 28px; }
.vneg { padding-top: 0; }
.canvas { width: 2400px; flex: none; position: relative; background: #fff; overflow: hidden; }
.glyph { display: block; }
.hintlabel text { font: 26.5px "Liberation Sans", sans-serif; fill: #108a0e; }
.widthlabel text { font: 20px "Liberation Sans", sans-serif; fill: #111; }

.toolbox {
  position: absolute; left: 0; top: 0; width: 104px; height: 708px;
  background: #e5e4e2; overflow: hidden;
}
.tools { display: grid; grid-template-columns: 53px 53px; grid-auto-rows: 52px; padding: 2px 0 0 1px; }
.tool { width: 52px; height: 52px; }
.tool svg { display: block; }
.tool.active { background: #5f6467; border: 1px solid #3f4346; border-radius: 4px; }
.tool.active svg { margin: -1px; }
.mouse { display: flex; flex-direction: column; margin-top: -4px; }
.mrow { height: 43.700px; display: flex; align-items: center; justify-content: space-between; padding: 0 0 0 5px; font-size: 20.5px; color: #1c1c1c; }
.mrow span { width: 77px; flex: none; margin-top: -8px; }
.mrow svg { flex: none; margin-left: 4px; }
.mrow:nth-child(n+3) svg { margin-left: -1px; }
.layers {
  position: absolute; left: 0; top: 712px; width: 202px; height: 194px;
  background: #e5e4e2;
}
.lrow {
  height: 48px; display: grid; align-items: center;
  grid-template-columns: 10px 28px 19px 36px 40px 1fr; font-size: 24px; color: #1a1a1a;
}
.check {
  grid-column: 2; width: 28px; height: 28px; position: relative;
  background: #1c3f80; border: 2px solid #13264e;
}
.check::after {
  content: ""; position: absolute; left: 8px; top: 3px; width: 7px; height: 14px;
  border: solid #eef2f8; border-width: 0 3px 3px 0; transform: rotate(40deg);
}
.lq { grid-column: 4; }
.lk { grid-column: 5; }
.ln { grid-column: 6; height: 48px; line-height: 48px; padding-left: 4px; margin-left: -4px; }
.ln.sel { background: #1a1a1a; color: #fff; }
.lbtns { display: flex; gap: 4px; padding: 6px 0 0 16px; }
.pm {
  width: 28px; height: 28px; padding: 0; font: 26px/22px "Liberation Sans", sans-serif;
  background: linear-gradient(180deg, #f0f0ee, #e2e2e0);
  border: 2px solid #9e9e9c; border-radius: 7px; color: #222;
}
.vscroll {
  flex: 1; position: relative; background: #e0e0dd;
  display: flex; flex-direction: column; align-items: center; justify-content: flex-end; padding-bottom: 5px;
}
.vthumb {
  position: absolute; left: 6px; top: 874px; width: 18px; height: 60px;
  background: #8a8b85; border-radius: 6px;
}
.bottombar { height: 30px; flex: none; display: flex; align-items: center; background: #e0e0dd; padding-left: 4px; }
.hthumb { width: 142px; height: 18px; margin-left: 428px; background: #8a8b85; border-radius: 6px; }
.ba-right { margin-left: 1826px; }
.corner { margin-left: 7px; }
```
